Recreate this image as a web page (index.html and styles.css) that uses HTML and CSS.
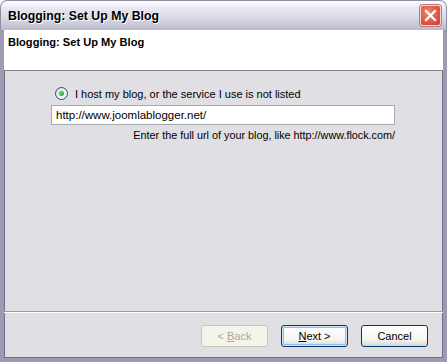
FILE: index.html
```html
<!doctype html>
<html>
<head>
    <meta charset="utf-8">
    <title>Blogging: Set Up My Blog</title>
    <link rel="stylesheet" href="styles.css">
</head>
<body>

<div class="window">
    <div class="titlebar">
        <span class="title">Blogging: Set Up My Blog</span>
        <a class="close" title="Close">
            <svg width="19" height="19" viewBox="0 0 19 19">
                <path d="M5 5 L14 14 M14 5 L5 14" stroke="#fff" stroke-width="2.2" stroke-linecap="square"/>
            </svg>
        </a>
    </div>

    <div class="frame">
        <div class="header">Blogging: Set Up My Blog</div>

        <div class="content">
            <label class="option">
                <span class="radio"><span class="dot"></span></span>
                I host my blog, or the service I use is not listed
            </label>
            <input class="url" type="text" value="http://www.joomlablogger.net/">
            <div class="hint">Enter the full url of your blog, like http://www.flock.com/</div>
        </div>

        <div class="footer">
            <button class="btn" disabled>&lt; <u>B</u>ack</button>
            <button class="btn default"><u>N</u>ext &gt;</button>
            <button class="btn">Cancel</button>
        </div>
    </div>
</div>

</body>
</html>
```

FILE: styles.css
```css
body {
    margin: 0;
    background: #fff;
    font-family: "Liberation Sans", Arial, sans-serif;
    font-size: 11px;
}

.window {
    width: 447px;
    height: 362px;
    display: flex;
    flex-direction: column;
}

.titlebar {
    height: 30px;
    box-sizing: border-box;
    display: flex;
    align-items: center;
    justify-content: space-between;
    padding: 0 5px 0 7px;
    border-radius: 7px 7px 0 0;
    border: 1px solid #8e8ea6;
    border-bottom: none;
    background: linear-gradient(#fdfdfe 0%, #e8e8f0 25%, #d9d9e4 60%, #b9b9cc 100%);
}

.title {
    font-family: "Liberation Sans", Arial, sans-serif;
    font-weight: bold;
    font-size: 12.3px;
    color: #000;
    text-shadow: 1px 1px 0 #fff;
}

.close {
    width: 21px;
    height: 21px;
    box-sizing: border-box;
    border: 1px solid #f4d6d0;
    border-radius: 3px;
    background: radial-gradient(circle at 40% 35%, #f08a75 0%, #dd5a45 55%, #c2402f 100%);
    box-shadow: 0 0 0 1px #c07878;
    display: flex;
}

.frame {
    flex: 1;
    display: flex;
    flex-direction: column;
    border: 4px solid #9b9bb2;
    border-top: none;
    box-shadow: inset 1px 0 0 #6f6f8a, inset -1px 0 0 #6f6f8a, inset 0 -1px 0 #6f6f8a;
    background: #e0dfe3;
}

.header {
    height: 41px;
    box-sizing: border-box;
    padding: 6px 4px;
    background: #fff;
    border-bottom: 1px solid #808090;
    font-family: "Liberation Sans", Arial, sans-serif;
    font-weight: bold;
    font-size: 11.1px;
}

.content {
    flex: 1;
    padding: 15px 48px 0 47px;
    display: flex;
    flex-direction: column;
    border-bottom: 1px solid #9d9da1;
}

.option {
    display: flex;
    align-items: center;
    gap: 7px;
    padding-left: 4px;
    height: 15px;
    color: #000;
}

.radio {
    width: 11px;
    height: 11px;
    border: 1px solid #1c5180;
    border-radius: 50%;
    background: linear-gradient(135deg, #dcdcd6, #fff);
    display: flex;
    align-items: center;
    justify-content: center;
}

.dot {
    width: 5px;
    height: 5px;
    border-radius: 50%;
    background: radial-gradient(circle at 40% 40%, #6fd16f, #21a121);
}

.url {
    margin-top: 4px;
    height: 20px;
    box-sizing: border-box;
    border: 1px solid #a5acb2;
    padding: 0 4px;
    font-family: "Liberation Sans", Arial, sans-serif;
    font-size: 11.5px;
    color: #000;
    background: #fff;
    outline: none;
}

.hint {
    margin-top: 4px;
    text-align: right;
    color: #000;
    font-size: 10.8px;
}

.footer {
    height: 46px;
    box-sizing: border-box;
    border-top: 1px solid #fff;
    display: flex;
    justify-content: flex-end;
    align-items: flex-start;
    gap: 13px;
    padding: 12px 15px 0 0;
}

.btn {
    width: 67px;
    height: 22px;
    box-sizing: border-box;
    border: 1px solid #003c74;
    border-radius: 3px;
    background: linear-gradient(#fff 0%, #f4f4f0 70%, #d8d6cf 100%);
    font-family: "Liberation Sans", Arial, sans-serif;
    font-size: 11px;
    color: #000;
    padding: 0;
}

.btn.default {
    box-shadow: inset 0 0 0 1px #cee7ff, inset 0 0 0 2px #98b8ea;
}

.btn:disabled {
    border-color: #c9c7ba;
    background: #f5f4ea;
    color: #aca899;
}
```
